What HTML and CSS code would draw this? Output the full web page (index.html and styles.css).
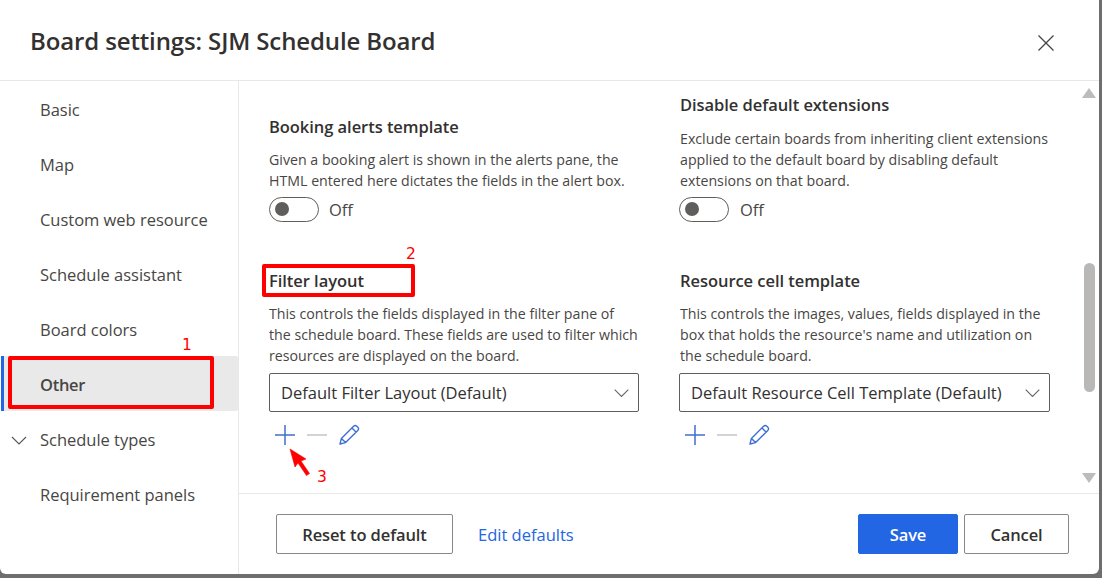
FILE: index.html
```html
<!DOCTYPE html>
<html lang="en">
<head>
<meta charset="utf-8">
<title>Board settings</title>
<link rel="stylesheet" href="styles.css">
</head>
<body>
<div class="dialog">
  <header class="head">
    <h1 class="title">Board settings: SJM Schedule Board</h1>
    <svg class="close" width="18" height="18" viewBox="0 0 18 18"><path d="M1.500 1.500l15 15M16.500 1.500l-15 15" stroke="#444" stroke-width="1.3" fill="none"/></svg>
  </header>
  <div class="middle">
    <nav class="nav">
      <div class="nav-item">Basic</div>
      <div class="nav-item">Map</div>
      <div class="nav-item">Custom web resource</div>
      <div class="nav-item">Schedule assistant</div>
      <div class="nav-item">Board colors</div>
      <div class="nav-item active">Other</div>
      <div class="nav-item"><svg class="chev" width="16" height="9" viewBox="0 0 16 9"><path d="M1 1l7 7 7-7" stroke="#555" stroke-width="1.1" fill="none"/></svg>Schedule types</div>
      <div class="nav-item">Requirement panels</div>
    </nav>
    <div class="pane">
      <main class="content">
        <div class="columns">
          <div class="col col-left">
            <section class="block">
              <h2 class="h">Booking alerts template</h2>
              <p class="desc">Given a booking alert is shown in the alerts pane, the HTML entered here dictates the fields in the alert box.</p>
              <div class="toggle-row"><span class="toggle"><span class="knob"></span></span><span class="off">Off</span></div>
            </section>
            <section class="block">
              <h2 class="h">Filter layout</h2>
              <p class="desc">This controls the fields displayed in the filter pane of the schedule board. These fields are used to filter which resources are displayed on the board.</p>
              <div class="select"><span>Default Filter Layout (Default)</span><svg width="15" height="8" viewBox="0 0 15 8"><path d="M.7.7l6.800 6.800L14.300.7" stroke="#666" stroke-width="1.1" fill="none"/></svg></div>
              <div class="tools">
                <svg width="22" height="22" viewBox="0 0 22 22"><path d="M11 1v20M1 11h20" stroke="#3f6fd1" stroke-width="1.5" fill="none"/></svg>
                <svg width="22" height="22" viewBox="0 0 22 22"><path d="M1 11h20" stroke="#c4c4c4" stroke-width="1.5" fill="none"/></svg>
                <svg width="22" height="22" viewBox="0 0 22 22"><path d="M2 20l1.400-5.600L15.600 2.200a2.300 2.300 0 0 1 3.200 0l1 1a2.300 2.300 0 0 1 0 3.200L7.600 18.600zM3.400 14.400l4.200 4.200M14 4l4 4" stroke="#3f6fd1" stroke-width="1.4" fill="none" stroke-linejoin="round"/></svg>
              </div>
            </section>
          </div>
          <div class="col col-right">
            <section class="block">
              <h2 class="h">Disable default extensions</h2>
              <p class="desc desc-first">Exclude certain boards from inheriting client extensions applied to the default board by disabling default extensions on that board.</p>
              <div class="toggle-row"><span class="toggle"><span class="knob"></span></span><span class="off">Off</span></div>
            </section>
            <section class="block">
              <h2 class="h">Resource cell template</h2>
              <p class="desc">This controls the images, values, fields displayed in the box that holds the resource's name and utilization on the schedule board.</p>
              <div class="select"><span>Default Resource Cell Template (Default)</span><svg width="15" height="8" viewBox="0 0 15 8"><path d="M.7.7l6.800 6.800L14.300.7" stroke="#666" stroke-width="1.1" fill="none"/></svg></div>
              <div class="tools">
                <svg width="22" height="22" viewBox="0 0 22 22"><path d="M11 1v20M1 11h20" stroke="#3f6fd1" stroke-width="1.5" fill="none"/></svg>
                <svg width="22" height="22" viewBox="0 0 22 22"><path d="M1 11h20" stroke="#c4c4c4" stroke-width="1.5" fill="none"/></svg>
                <svg width="22" height="22" viewBox="0 0 22 22"><path d="M2 20l1.400-5.600L15.600 2.200a2.300 2.300 0 0 1 3.200 0l1 1a2.300 2.300 0 0 1 0 3.200L7.600 18.600zM3.400 14.400l4.200 4.200M14 4l4 4" stroke="#3f6fd1" stroke-width="1.4" fill="none" stroke-linejoin="round"/></svg>
              </div>
            </section>
          </div>
        </div>
        <div class="scrollbar">
          <span class="arrow-up"></span>
          <span class="thumb"></span>
          <span class="arrow-down"></span>
        </div>
      </main>
      <footer class="foot">
        <div class="foot-left">
          <button class="btn">Reset to default</button>
          <a class="link">Edit defaults</a>
        </div>
        <div class="foot-right">
          <button class="btn primary">Save</button>
          <button class="btn cancel">Cancel</button>
        </div>
      </footer>
    </div>
  </div>
</div>
<div class="mark mark-1"></div>
<div class="mark mark-2"></div>
<span class="num num-1">1</span>
<span class="num num-2">2</span>
<span class="num num-3">3</span>
<svg class="pointer" width="26" height="32" viewBox="0 0 26 32"><path d="M2 2l5 18 3-4 8.500 12.500 3-2L13 14l5-2z" fill="#f00" stroke="#f00" stroke-width="0.6"/></svg>
</body>
</html>
```

FILE: styles.css
```css
* { box-sizing: border-box; }
html, body { margin: 0; height: 100%; }
body {
  width: 1102px;
  height: 578px;
  overflow: hidden;
  background: #6e6e6e;
  font-family: "Open Sans", "Noto Sans", sans-serif;
  color: #323130;
  position: relative;
}
.dialog {
  width: 1099px;
  height: 574px;
  background: #fff;
  border-radius: 0 0 6px 6px;
  display: flex;
  flex-direction: column;
}
.head {
  height: 81px;
  flex: none;
  border-bottom: 1px solid #e8e8e8;
  display: flex;
  align-items: center;
  justify-content: space-between;
  padding: 0 44px 0 30px;
}
.title { margin: 0; font-size: 24px; font-weight: 600; letter-spacing: -0.13px; color: #323130; }
.close { display: block; margin-top: 5px; }
.middle { flex: 1; display: flex; min-height: 0; }
.nav {
  width: 239px;
  flex: none;
  border-right: 1px solid #e8e8e8;
  padding-top: 1px;
}
.nav-item {
  height: 55px;
  display: flex;
  align-items: center;
  padding-left: 40px;
  font-size: 16.500px;
  letter-spacing: -0.02px;
  color: #484644;
  position: relative;
}
.nav-item.active {
  background: #e9e9e9;
  font-weight: 600;
  margin: -1px 0 1px 1px;
  padding: 2px 0 0 39px;
  border-radius: 2px;
  letter-spacing: -0.3px;
}
.nav-item.active::before {
  content: "";
  position: absolute;
  left: 0;
  top: 0;
  bottom: 0;
  width: 3px;
  background: #2266e3;
}
.chev { position: absolute; left: 11px; top: 24px; }
.pane { flex: 1; min-width: 0; display: flex; flex-direction: column; }
.content { flex: 1; min-height: 0; display: flex; }
.columns { width: 840px; flex: none; display: flex; gap: 40px; padding: 12px 0 0 30px; }
.col { width: 370px; flex: none; }
.col-right { width: 371px; padding-left: 1px; }
.col-left { padding-top: 22px; }
.block + .block { margin-top: 47px; }
.h { margin: 0; font-size: 16.500px; line-height: 24px; font-weight: 600; letter-spacing: -0.05px; color: #323130; }
.desc { margin: 10px 0 0; font-size: 14.200px; line-height: 21px; letter-spacing: 0; color: #484644; }
.desc-first { margin-top: 11px; }
.toggle-row { display: flex; align-items: center; gap: 10px; margin-top: 5px; height: 26px; }
.toggle {
  width: 50px;
  height: 25px;
  border: 1px solid #605e5c;
  border-radius: 13px;
  display: flex;
  align-items: center;
  padding-left: 5px;
}
.col-right .toggle { margin-left: -1px; }
.col-right .off { margin-left: 1px; }
.knob { width: 14px; height: 14px; border-radius: 50%; background: #605e5c; }
.off { font-size: 16.500px; letter-spacing: 0; color: #484644; }
.select {
  height: 39px;
  margin-top: 7px;
  border: 1px solid #605e5c;
  border-radius: 2px;
  display: flex;
  align-items: center;
  justify-content: space-between;
  padding: 0 9px 0 11px;
  font-size: 16.500px;
  letter-spacing: 0;
  color: #323130;
}
.col-right .select { margin-left: -1px; }
.tools { display: flex; gap: 10px; margin-top: 12px; padding-left: 5px; height: 22px; }
.col-right .tools { margin-left: -1px; }
.scrollbar {
  width: 20px;
  flex: none;
  display: flex;
  flex-direction: column;
  align-items: center;
  padding: 7px 0 10px;
}
.arrow-up { width: 0; height: 0; border-left: 7px solid transparent; border-right: 7px solid transparent; border-bottom: 10px solid #bcbcbc; }
.thumb { width: 11px; height: 129px; background: #b9b8b6; border-radius: 6px; margin-top: 165px; }
.arrow-down { width: 0; height: 0; border-left: 7px solid transparent; border-right: 7px solid transparent; border-top: 10px solid #bcbcbc; margin-top: auto; }
.foot {
  height: 81px;
  flex: none;
  border-top: 1px solid #e8e8e8;
  display: flex;
  align-items: center;
  justify-content: space-between;
  padding: 0 30px 0 37px;
}
.foot-left { display: flex; align-items: center; gap: 25px; }
.foot-right { display: flex; gap: 6px; }
.btn {
  height: 40px;
  width: 177px;
  background: #fff;
  border: 1px solid #8a8886;
  border-radius: 2px;
  font: 600 16.500px "Open Sans", "Noto Sans", sans-serif;
  letter-spacing: -0.1px;
  color: #323130;
  padding: 0;
}
.btn.primary { width: 100px; background: #2266e3; border-color: #2266e3; color: #fff; }
.btn.cancel { width: 105px; }
.link { font-size: 16.500px; letter-spacing: 0; color: #2266e3; }
.mark { position: absolute; border: 4px solid #f00; border-radius: 2px; }
.mark-1 { left: 8px; top: 356px; width: 206px; height: 53px; }
.mark-2 { left: 262px; top: 264px; width: 153px; height: 33px; }
.num { position: absolute; font-family: "DejaVu Sans", sans-serif; font-size: 15.500px; color: #f00; line-height: 18px; }
.num-1 { left: 182px; top: 336px; }
.num-2 { left: 406px; top: 245px; }
.num-3 { left: 317px; top: 468px; }
.pointer { position: absolute; left: 288px; top: 447px; }
```
